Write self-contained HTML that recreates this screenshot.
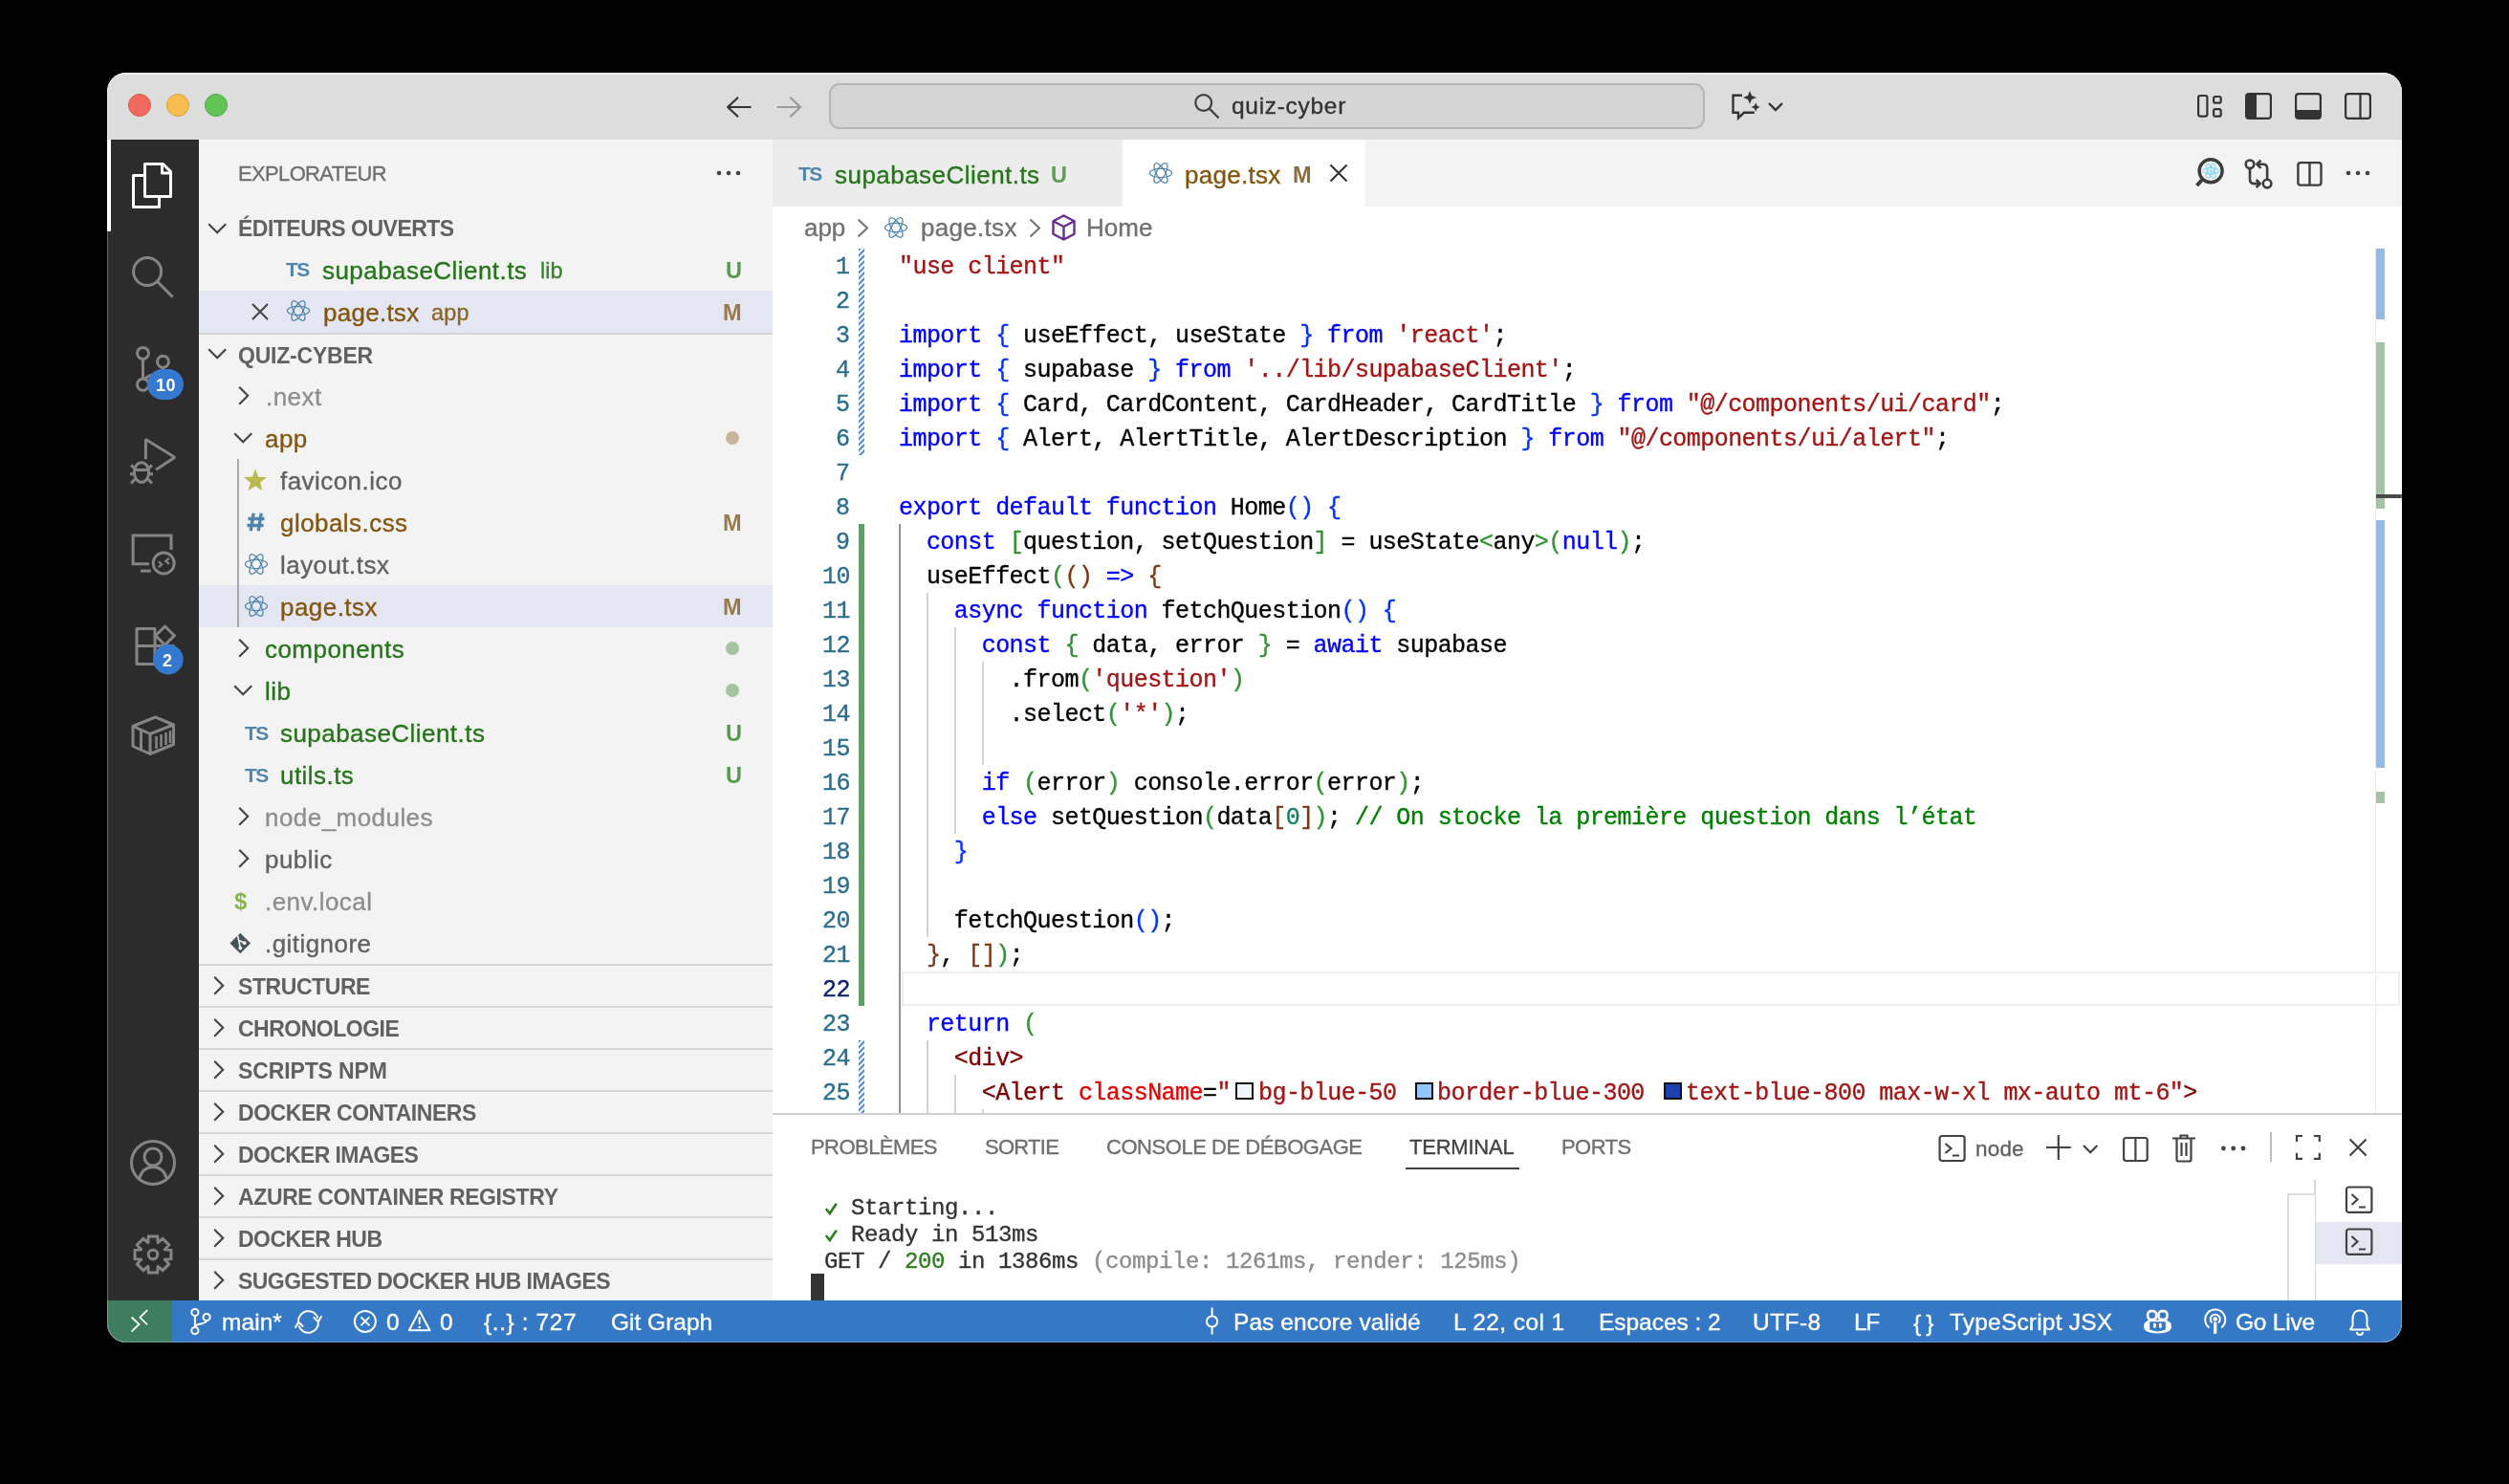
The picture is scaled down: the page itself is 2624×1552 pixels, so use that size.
<!DOCTYPE html>
<html><head><meta charset="utf-8">
<style>
*{box-sizing:border-box;margin:0;padding:0}
html,body{width:2624px;height:1552px;background:#000;overflow:hidden}
body{font-family:"Liberation Sans",sans-serif;position:relative}
.a{position:absolute}
#win{position:absolute;left:0;top:0;width:2624px;height:1552px;clip-path:inset(76px 112px 148px 112px round 20px);background:#fff}
.t{position:absolute;white-space:pre;line-height:1;will-change:transform;-webkit-text-stroke:0.35px currentColor}
svg{position:absolute;overflow:visible}
</style></head><body>
<div id="win">
<div class="a" style="left:112px;top:76px;width:2400px;height:70px;background:#dddddd;"></div>
<div class="a" style="left:112px;top:76px;width:2400px;height:2px;background:#ededed;"></div>
<div class="a" style="left:112px;top:146px;width:96px;height:1214px;background:#2c2c2c;"></div>
<div class="a" style="left:208px;top:146px;width:600px;height:1214px;background:#f3f3f3;"></div>
<div class="a" style="left:808px;top:146px;width:1704px;height:70px;background:#f3f3f3;"></div>
<div class="a" style="left:808px;top:216px;width:1704px;height:948px;background:#ffffff;"></div>
<div class="a" style="left:808px;top:1164px;width:1704px;height:196px;background:#ffffff;"></div>
<div class="a" style="left:808px;top:1164px;width:1704px;height:2px;background:#cfcfcf;"></div>
<div class="a" style="left:112px;top:1360px;width:2400px;height:44px;background:#3478c6;"></div>
<div class="a" style="left:112px;top:1360px;width:68px;height:44px;background:#3e7d5d;"></div>
<svg style="left:120px;top:90px" width="130" height="40" viewBox="0 0 130 40">
<circle cx="26" cy="20" r="11.5" fill="#ee6a5e" stroke="#d3594e" stroke-width="1"/>
<circle cx="66" cy="20" r="11.5" fill="#f5be4f" stroke="#d9a23d" stroke-width="1"/>
<circle cx="106" cy="20" r="11.5" fill="#61c455" stroke="#50a743" stroke-width="1"/>
</svg>
<svg style="left:750px;top:95px" width="100" height="35" viewBox="0 0 100 35">
<g fill="none" stroke-width="2.2" stroke-linecap="butt" stroke-linejoin="miter">
<path d="M35.5 17H11.5M22 6.8L11.2 17L22 27.2" stroke="#333"/>
<path d="M62.5 17H86.8M76.3 6.8L87.1 17L76.3 27.2" stroke="#9b9b9b"/>
</g></svg>
<div class="a" style="left:867px;top:87px;width:916px;height:48px;border:2px solid #b6b6b6;border-radius:11px;background:#d5d5d5"></div>
<svg style="left:1240px;top:90px" width="50" height="40" viewBox="0 0 50 40"><g fill="none" stroke="#3f3f3f" stroke-width="2.2"><circle cx="18.7" cy="17.5" r="8.4"/><path d="M24.8 23.6L34.6 33.4"/></g></svg>
<div class="t" style='left:1287.5px;top:96.8px;font:400 24.5px "Liberation Sans",sans-serif;color:#333333;letter-spacing:0.698px;'>quiz-cyber</div>
<svg style="left:1800px;top:90px" width="80" height="40" viewBox="0 0 80 40">
<g fill="none" stroke="#333" stroke-width="2.4" stroke-linejoin="miter">
<path d="M22 9.8H12.5V27.8H18V33.5L23.8 27.8H34.8"/>
<path d="M50 18L57 25L64 18"/>
</g>
<path fill="#333" d="M30 5L32 9.9L37 12L32 14.1L30 18.8L28 14.1L23 12L28 9.9Z"/>
<path fill="#333" d="M36.2 17.2L37.5 20.6L40.8 22L37.5 23.4L36.2 26.8L34.9 23.4L31.5 22L34.9 20.6Z"/>
</svg>
<svg style="left:2290px;top:90px" width="200" height="40" viewBox="0 0 200 40">
<g fill="none" stroke="#333" stroke-width="2.2">
<rect x="9.1" y="10" width="9.3" height="21.6" rx="2"/>
<rect x="25.1" y="11" width="7.6" height="6.7" rx="2"/>
<rect x="25.1" y="24.1" width="7.6" height="7.6" rx="2"/>
<rect x="59.1" y="8.1" width="25.8" height="25.8" rx="3"/>
<rect x="111.1" y="8.1" width="25.8" height="25.8" rx="3"/>
<rect x="163.1" y="8.1" width="25.8" height="25.8" rx="3"/>
<path d="M178.5 8.1V33.9"/>
</g>
<g fill="#333">
<path d="M59 11a3 3 0 0 1 3-3h8v26h-8a3 3 0 0 1-3-3z"/>
<path d="M111 25h26v6a3 3 0 0 1-3 3h-20a3 3 0 0 1-3-3z"/>
</g>
</svg>
<div class="a" style="left:112px;top:146px;width:4px;height:96px;background:#ffffff;"></div>
<svg style="left:130px;top:160px" width="60" height="70" viewBox="0 0 60 70">
<g fill="none" stroke="#fff" stroke-width="3" stroke-linejoin="round">
<path d="M21.5 11.5V45.5H48.5V19.5L40.5 11.5Z"/>
<path d="M39.5 11.5V21H48.5"/>
<path d="M21.5 23.5H9.5V56.5H36.5V45.5"/>
</g></svg>
<svg style="left:130px;top:260px" width="60" height="60" viewBox="0 0 60 60"><g fill="none" stroke="#858585" stroke-width="3"><circle cx="24.1" cy="24" r="14.5"/><path d="M34.8 34.8L50.6 50.6"/></g></svg>
<svg style="left:130px;top:350px" width="70" height="80" viewBox="0 0 70 80"><g fill="none" stroke="#858585" stroke-width="3">
<circle cx="19.5" cy="19.4" r="6"/><circle cx="40.5" cy="28.3" r="6"/><circle cx="19.5" cy="52.3" r="6"/>
<path d="M19.5 25.4V46.3"/><path d="M40.5 34.3C40.5 42 25 40 21 47"/></g>
<rect x="24" y="36" width="38" height="32" rx="16" fill="#3478cf"/>
</svg>
<div class="t" style='left:162.5px;top:393.2px;font:700 18px "Liberation Sans",sans-serif;color:#ffffff;letter-spacing:0.484px;-webkit-text-stroke:0;'>10</div>
<svg style="left:130px;top:450px" width="70" height="70" viewBox="0 0 70 70"><g fill="none" stroke="#858585" stroke-width="3" stroke-linejoin="bevel">
<path d="M22.4 30.2V9.5L52.8 28.2L33.1 41.2"/>
<ellipse cx="18" cy="44" rx="7.6" ry="10.3"/>
<path d="M10.5 41.4H25.5M6 45.7H10.5M25.5 45.7H30M7 36.5L11 40M29 36.5L25 40M7 55.5L11.3 51M29 55.5L24.7 51"/>
</g></svg>
<svg style="left:130px;top:550px" width="70" height="60" viewBox="0 0 70 60"><g fill="none" stroke="#858585" stroke-width="3">
<path d="M26 39.7H9.1V9.9H49V25"/>
<path d="M17 47.1H27.8"/>
<circle cx="41.2" cy="39" r="11"/>
<path d="M35.8 37.2L39.2 40.2L35.8 43.2M46.8 33.8L43.3 36.8L46.8 39.8" stroke-width="2.2"/>
</g></svg>
<svg style="left:130px;top:640px" width="70" height="70" viewBox="0 0 70 70"><g fill="none" stroke="#858585" stroke-width="3">
<path d="M13 17.5H32V54.4H13ZM13 35.4H51.5V54.4H32" stroke-linejoin="round"/>
<path d="M42.5 15L52.3 24.8L42.5 34.6L32.7 24.8Z"/>
</g>
<circle cx="45.9" cy="49.7" r="15.8" fill="#3478cf"/>
</svg>
<div class="t" style='left:169.5px;top:681.2px;font:700 18px "Liberation Sans",sans-serif;color:#ffffff;-webkit-text-stroke:0;'>2</div>
<svg style="left:130px;top:740px" width="60" height="60" viewBox="0 0 60 60"><g fill="none" stroke="#858585" stroke-width="3" stroke-linejoin="round">
<path d="M9 19.5L32.5 10L51.5 18V38.5L27 48.5L9 40.5Z"/>
<path d="M9 19.5L27 27.5L51.5 18M27 27.5V48.5M17.5 23.5V44.5"/>
<path d="M33.5 30V43M38.5 28V41M43.5 26V39M48 24V37" stroke-width="2.5"/>
</g></svg>
<svg style="left:130px;top:1186px" width="60" height="60" viewBox="0 0 60 60"><g fill="none" stroke="#858585" stroke-width="3">
<circle cx="30" cy="30" r="22.5"/><circle cx="30" cy="24" r="9"/>
<path d="M15.5 47C18 38 24 34.5 30 34.5S42 38 44.5 47"/></g></svg>
<svg style="left:130px;top:1282px" width="60" height="60" viewBox="0 0 60 60"><g fill="none" stroke="#858585" stroke-width="3" stroke-linejoin="miter"><path d="M48.94 25.36 L48.94 34.64 L42.49 35.13 L42.46 35.20 L46.67 40.12 L40.12 46.67 L35.20 42.46 L35.13 42.49 L34.64 48.94 L25.36 48.94 L24.87 42.49 L24.80 42.46 L19.88 46.67 L13.33 40.12 L17.54 35.20 L17.51 35.13 L11.06 34.64 L11.06 25.36 L17.51 24.87 L17.54 24.80 L13.33 19.88 L19.88 13.33 L24.80 17.54 L24.87 17.51 L25.36 11.06 L34.64 11.06 L35.13 17.51 L35.20 17.54 L40.12 13.33 L46.67 19.88 L42.46 24.80 L42.49 24.87Z"/><circle cx="30" cy="30" r="4.8"/></g></svg>
<div class="t" style='left:249.2px;top:169.1px;font:400 22px "Liberation Sans",sans-serif;color:#6f6f6f;letter-spacing:-0.653px;'>EXPLORATEUR</div>
<svg style="left:747px;top:176px" width="30" height="10" viewBox="0 0 30 10"><circle cx="5" cy="5" r="2.3" fill="#424242"/><circle cx="15" cy="5" r="2.3" fill="#424242"/><circle cx="25" cy="5" r="2.3" fill="#424242"/></svg>
<svg style="left:217px;top:228.5px" width="24" height="20" viewBox="0 0 24 20"><path d="M1.2 5.3L10.2 14.3L19.2 5.3" fill="none" stroke="#424242" stroke-width="2.1"/></svg>
<div class="t" style='left:249.2px;top:225.8px;font:700 23px "Liberation Sans",sans-serif;color:#616161;letter-spacing:-0.511px;-webkit-text-stroke:0;'>ÉDITEURS OUVERTS</div>
<div class="t" style='left:299.2px;top:270.4px;font:700 21px "Liberation Sans",sans-serif;color:#5186aa;letter-spacing:-1.622px;-webkit-text-stroke:0;'>TS</div>
<div class="t" style='left:337.0px;top:267.5px;font:400 26px "Liberation Sans",sans-serif;color:#25741a;letter-spacing:0.448px;'>supabaseClient.ts</div>
<div class="t" style='left:565.3px;top:269.7px;font:400 23.4px "Liberation Sans",sans-serif;color:#25741a;letter-spacing:-0.002px;opacity:.9;'>lib</div>
<div class="t" style='left:758.5px;top:269.6px;font:700 23.5px "Liberation Sans",sans-serif;color:#549a4a;letter-spacing:-0.384px;-webkit-text-stroke:0;'>U</div>
<div class="a" style="left:208px;top:304px;width:600px;height:44px;background:#e4e6f1;"></div>
<svg style="left:262px;top:316px" width="20" height="20" viewBox="0 0 20 20"><path d="M2 2L18 18M18 2L2 18" stroke="#424242" stroke-width="2" fill="none"/></svg>
<svg style="left:297.6px;top:311.4px" width="28.0" height="28.0" viewBox="0 0 28.0 28.0"><g transform="translate(14.0,14.0)" fill="none" stroke="#5186aa" stroke-width="1.25"><ellipse cx="0" cy="0" rx="11.60" ry="4.60" transform="rotate(0)"/><ellipse cx="0" cy="0" rx="11.60" ry="4.60" transform="rotate(60)"/><ellipse cx="0" cy="0" rx="11.60" ry="4.60" transform="rotate(120)"/></g></svg>
<div class="t" style='left:337.5px;top:311.5px;font:400 26px "Liberation Sans",sans-serif;color:#83550f;letter-spacing:0.263px;'>page.tsx</div>
<div class="t" style='left:451.2px;top:313.7px;font:400 23.4px "Liberation Sans",sans-serif;color:#83550f;letter-spacing:0.223px;opacity:.9;'>app</div>
<div class="t" style='left:756.2px;top:313.6px;font:700 23.5px "Liberation Sans",sans-serif;color:#9a7a4c;letter-spacing:-0.078px;-webkit-text-stroke:0;'>M</div>
<div class="a" style="left:208px;top:348px;width:600px;height:2px;background:#d8d8d8;"></div>
<svg style="left:217px;top:360px" width="24" height="20" viewBox="0 0 24 20"><path d="M1.2 5.3L10.2 14.3L19.2 5.3" fill="none" stroke="#424242" stroke-width="2.1"/></svg>
<div class="t" style='left:249.2px;top:359.1px;font:700 23px "Liberation Sans",sans-serif;color:#616161;letter-spacing:-0.212px;-webkit-text-stroke:0;'>QUIZ-CYBER</div>
<svg style="left:249px;top:402px" width="20" height="24" viewBox="0 0 20 24"><path d="M1.2 2.8L10.2 11.8L1.2 20.8" fill="none" stroke="#424242" stroke-width="2.1"/></svg>
<div class="t" style='left:277.9px;top:399.9px;font:400 26px "Liberation Sans",sans-serif;color:#8e8e8e;letter-spacing:0.450px;'>.next</div>
<svg style="left:243.8px;top:448px" width="24" height="20" viewBox="0 0 24 20"><path d="M1.2 5.3L10.2 14.3L19.2 5.3" fill="none" stroke="#424242" stroke-width="2.1"/></svg>
<div class="t" style='left:276.8px;top:443.9px;font:400 26px "Liberation Sans",sans-serif;color:#83550f;letter-spacing:0.450px;'>app</div>
<svg style="left:758.8px;top:451px" width="14" height="14" viewBox="0 0 14 14"><circle cx="7" cy="7" r="7" fill="#c9b59a"/></svg>
<svg style="left:253.2px;top:489px" width="28" height="28" viewBox="0 0 28 28"><polygon points="14.00,1.40 17.12,9.71 25.98,10.11 19.04,15.64 21.41,24.19 14.00,19.30 6.59,24.19 8.96,15.64 2.02,10.11 10.88,9.71" fill="#b9b950"/></svg>
<div class="t" style='left:292.9px;top:487.9px;font:400 26px "Liberation Sans",sans-serif;color:#616161;letter-spacing:0.450px;'>favicon.ico</div>
<svg style="left:256px;top:533px" width="24" height="26" viewBox="0 0 24 26"><path d="M9.2 3.8L6.2 22.2M17.2 3.8L14.2 22.2M3.5 9.5H20.5M2.5 16.5H19.5" stroke="#5186aa" stroke-width="3.4" fill="none"/></svg>
<div class="t" style='left:292.9px;top:531.9px;font:400 26px "Liberation Sans",sans-serif;color:#83550f;letter-spacing:0.450px;'>globals.css</div>
<div class="t" style='left:756.2px;top:533.7px;font:700 23.5px "Liberation Sans",sans-serif;color:#9a7a4c;letter-spacing:-0.078px;-webkit-text-stroke:0;'>M</div>
<svg style="left:253.60000000000002px;top:575.5px" width="28.0" height="28.0" viewBox="0 0 28.0 28.0"><g transform="translate(14.0,14.0)" fill="none" stroke="#5186aa" stroke-width="1.25"><ellipse cx="0" cy="0" rx="11.60" ry="4.60" transform="rotate(0)"/><ellipse cx="0" cy="0" rx="11.60" ry="4.60" transform="rotate(60)"/><ellipse cx="0" cy="0" rx="11.60" ry="4.60" transform="rotate(120)"/></g></svg>
<div class="t" style='left:292.9px;top:575.9px;font:400 26px "Liberation Sans",sans-serif;color:#616161;letter-spacing:0.450px;'>layout.tsx</div>
<div class="a" style="left:208px;top:612px;width:600px;height:44px;background:#e4e6f1;"></div>
<svg style="left:253.60000000000002px;top:619.5px" width="28.0" height="28.0" viewBox="0 0 28.0 28.0"><g transform="translate(14.0,14.0)" fill="none" stroke="#5186aa" stroke-width="1.25"><ellipse cx="0" cy="0" rx="11.60" ry="4.60" transform="rotate(0)"/><ellipse cx="0" cy="0" rx="11.60" ry="4.60" transform="rotate(60)"/><ellipse cx="0" cy="0" rx="11.60" ry="4.60" transform="rotate(120)"/></g></svg>
<div class="t" style='left:292.9px;top:619.9px;font:400 26px "Liberation Sans",sans-serif;color:#83550f;letter-spacing:0.450px;'>page.tsx</div>
<div class="t" style='left:756.2px;top:621.7px;font:700 23.5px "Liberation Sans",sans-serif;color:#9a7a4c;letter-spacing:-0.078px;-webkit-text-stroke:0;'>M</div>
<svg style="left:249px;top:666px" width="20" height="24" viewBox="0 0 20 24"><path d="M1.2 2.8L10.2 11.8L1.2 20.8" fill="none" stroke="#424242" stroke-width="2.1"/></svg>
<div class="t" style='left:277.2px;top:663.9px;font:400 26px "Liberation Sans",sans-serif;color:#25741a;letter-spacing:0.450px;'>components</div>
<svg style="left:758.8px;top:671px" width="14" height="14" viewBox="0 0 14 14"><circle cx="7" cy="7" r="7" fill="#a4c49f"/></svg>
<svg style="left:243.8px;top:712px" width="24" height="20" viewBox="0 0 24 20"><path d="M1.2 5.3L10.2 14.3L19.2 5.3" fill="none" stroke="#424242" stroke-width="2.1"/></svg>
<div class="t" style='left:277.0px;top:707.9px;font:400 26px "Liberation Sans",sans-serif;color:#25741a;letter-spacing:0.450px;'>lib</div>
<svg style="left:758.8px;top:715px" width="14" height="14" viewBox="0 0 14 14"><circle cx="7" cy="7" r="7" fill="#a4c49f"/></svg>
<div class="t" style='left:255.6px;top:754.9px;font:700 21px "Liberation Sans",sans-serif;color:#5186aa;letter-spacing:-1.622px;-webkit-text-stroke:0;'>TS</div>
<div class="t" style='left:293.2px;top:751.9px;font:400 26px "Liberation Sans",sans-serif;color:#25741a;letter-spacing:0.450px;'>supabaseClient.ts</div>
<div class="t" style='left:758.5px;top:753.7px;font:700 23.5px "Liberation Sans",sans-serif;color:#549a4a;letter-spacing:-0.384px;-webkit-text-stroke:0;'>U</div>
<div class="t" style='left:255.6px;top:798.9px;font:700 21px "Liberation Sans",sans-serif;color:#5186aa;letter-spacing:-1.622px;-webkit-text-stroke:0;'>TS</div>
<div class="t" style='left:293.2px;top:795.9px;font:400 26px "Liberation Sans",sans-serif;color:#25741a;letter-spacing:0.450px;'>utils.ts</div>
<div class="t" style='left:758.5px;top:797.7px;font:700 23.5px "Liberation Sans",sans-serif;color:#549a4a;letter-spacing:-0.384px;-webkit-text-stroke:0;'>U</div>
<svg style="left:249px;top:842px" width="20" height="24" viewBox="0 0 20 24"><path d="M1.2 2.8L10.2 11.8L1.2 20.8" fill="none" stroke="#424242" stroke-width="2.1"/></svg>
<div class="t" style='left:277.0px;top:839.9px;font:400 26px "Liberation Sans",sans-serif;color:#8e8e8e;letter-spacing:0.450px;'>node_modules</div>
<svg style="left:249px;top:886px" width="20" height="24" viewBox="0 0 20 24"><path d="M1.2 2.8L10.2 11.8L1.2 20.8" fill="none" stroke="#424242" stroke-width="2.1"/></svg>
<div class="t" style='left:277.0px;top:883.9px;font:400 26px "Liberation Sans",sans-serif;color:#616161;letter-spacing:0.450px;'>public</div>
<div class="t" style='left:244.5px;top:928.6px;font:700 24px "Liberation Sans",sans-serif;color:#89b64b;-webkit-text-stroke:0;'>$</div>
<div class="t" style='left:277.4px;top:927.9px;font:400 26px "Liberation Sans",sans-serif;color:#8e8e8e;letter-spacing:0.450px;'>.env.local</div>
<svg style="left:239px;top:972.5px" width="26" height="26" viewBox="0 0 26 26"><path d="M12.3 2.7L23.1 13.5L12.3 24.3L1.5 13.5Z" fill="#41535b"/><path d="M9.7 5.5L12.3 18.5M11 10.5L16.7 13.2" stroke="#f3f3f3" stroke-width="1.6" fill="none"/><circle cx="12.3" cy="18.5" r="1.9" fill="#f3f3f3"/><circle cx="16.7" cy="13.2" r="1.9" fill="#f3f3f3"/></svg>
<div class="t" style='left:277.4px;top:971.9px;font:400 26px "Liberation Sans",sans-serif;color:#616161;letter-spacing:0.450px;'>.gitignore</div>
<div class="a" style="left:248px;top:480px;width:2px;height:176px;background:#a9a9a9;"></div>
<div class="a" style="left:208px;top:1008px;width:600px;height:2px;background:#d8d8d8;"></div>
<svg style="left:222.5px;top:1018.5px" width="20" height="24" viewBox="0 0 20 24"><path d="M1.2 2.8L10.2 11.8L1.2 20.8" fill="none" stroke="#424242" stroke-width="2.1"/></svg>
<div class="t" style='left:249.0px;top:1019.0px;font:700 23px "Liberation Sans",sans-serif;color:#616161;letter-spacing:-0.427px;-webkit-text-stroke:0;'>STRUCTURE</div>
<div class="a" style="left:208px;top:1052px;width:600px;height:2px;background:#d8d8d8;"></div>
<svg style="left:222.5px;top:1062.5px" width="20" height="24" viewBox="0 0 20 24"><path d="M1.2 2.8L10.2 11.8L1.2 20.8" fill="none" stroke="#424242" stroke-width="2.1"/></svg>
<div class="t" style='left:249.0px;top:1063.0px;font:700 23px "Liberation Sans",sans-serif;color:#616161;letter-spacing:-0.498px;-webkit-text-stroke:0;'>CHRONOLOGIE</div>
<div class="a" style="left:208px;top:1096px;width:600px;height:2px;background:#d8d8d8;"></div>
<svg style="left:222.5px;top:1106.5px" width="20" height="24" viewBox="0 0 20 24"><path d="M1.2 2.8L10.2 11.8L1.2 20.8" fill="none" stroke="#424242" stroke-width="2.1"/></svg>
<div class="t" style='left:249.0px;top:1107.0px;font:700 23px "Liberation Sans",sans-serif;color:#616161;letter-spacing:-0.126px;-webkit-text-stroke:0;'>SCRIPTS NPM</div>
<div class="a" style="left:208px;top:1140px;width:600px;height:2px;background:#d8d8d8;"></div>
<svg style="left:222.5px;top:1150.5px" width="20" height="24" viewBox="0 0 20 24"><path d="M1.2 2.8L10.2 11.8L1.2 20.8" fill="none" stroke="#424242" stroke-width="2.1"/></svg>
<div class="t" style='left:249.0px;top:1151.0px;font:700 23px "Liberation Sans",sans-serif;color:#616161;letter-spacing:-0.442px;-webkit-text-stroke:0;'>DOCKER CONTAINERS</div>
<div class="a" style="left:208px;top:1184px;width:600px;height:2px;background:#d8d8d8;"></div>
<svg style="left:222.5px;top:1194.5px" width="20" height="24" viewBox="0 0 20 24"><path d="M1.2 2.8L10.2 11.8L1.2 20.8" fill="none" stroke="#424242" stroke-width="2.1"/></svg>
<div class="t" style='left:249.0px;top:1195.0px;font:700 23px "Liberation Sans",sans-serif;color:#616161;letter-spacing:-0.661px;-webkit-text-stroke:0;'>DOCKER IMAGES</div>
<div class="a" style="left:208px;top:1228px;width:600px;height:2px;background:#d8d8d8;"></div>
<svg style="left:222.5px;top:1238.5px" width="20" height="24" viewBox="0 0 20 24"><path d="M1.2 2.8L10.2 11.8L1.2 20.8" fill="none" stroke="#424242" stroke-width="2.1"/></svg>
<div class="t" style='left:249.0px;top:1239.0px;font:700 23px "Liberation Sans",sans-serif;color:#616161;letter-spacing:-0.381px;-webkit-text-stroke:0;'>AZURE CONTAINER REGISTRY</div>
<div class="a" style="left:208px;top:1272px;width:600px;height:2px;background:#d8d8d8;"></div>
<svg style="left:222.5px;top:1282.5px" width="20" height="24" viewBox="0 0 20 24"><path d="M1.2 2.8L10.2 11.8L1.2 20.8" fill="none" stroke="#424242" stroke-width="2.1"/></svg>
<div class="t" style='left:249.0px;top:1283.0px;font:700 23px "Liberation Sans",sans-serif;color:#616161;letter-spacing:-0.539px;-webkit-text-stroke:0;'>DOCKER HUB</div>
<div class="a" style="left:208px;top:1316px;width:600px;height:2px;background:#d8d8d8;"></div>
<svg style="left:222.5px;top:1326.5px" width="20" height="24" viewBox="0 0 20 24"><path d="M1.2 2.8L10.2 11.8L1.2 20.8" fill="none" stroke="#424242" stroke-width="2.1"/></svg>
<div class="t" style='left:249.0px;top:1327.0px;font:700 23px "Liberation Sans",sans-serif;color:#616161;letter-spacing:-0.549px;-webkit-text-stroke:0;'>SUGGESTED DOCKER HUB IMAGES</div>
<div class="a" style="left:808px;top:146px;width:366px;height:70px;background:#ececec;"></div>
<div class="a" style="left:1174px;top:146px;width:254px;height:70px;background:#ffffff;"></div>
<div class="t" style='left:835.2px;top:169.7px;font:700 21px "Liberation Sans",sans-serif;color:#5186aa;letter-spacing:-1.622px;-webkit-text-stroke:0;'>TS</div>
<div class="t" style='left:872.9px;top:167.6px;font:400 26px "Liberation Sans",sans-serif;color:#25741a;letter-spacing:0.465px;'>supabaseClient.ts</div>
<div class="t" style='left:1099.0px;top:169.7px;font:700 23.5px "Liberation Sans",sans-serif;color:#5f9d52;letter-spacing:-0.384px;-webkit-text-stroke:0;'>U</div>
<svg style="left:1199.6px;top:167.0px" width="28.0" height="28.0" viewBox="0 0 28.0 28.0"><g transform="translate(14.0,14.0)" fill="none" stroke="#5186aa" stroke-width="1.25"><ellipse cx="0" cy="0" rx="11.60" ry="4.60" transform="rotate(0)"/><ellipse cx="0" cy="0" rx="11.60" ry="4.60" transform="rotate(60)"/><ellipse cx="0" cy="0" rx="11.60" ry="4.60" transform="rotate(120)"/></g></svg>
<div class="t" style='left:1239.3px;top:167.6px;font:400 26px "Liberation Sans",sans-serif;color:#83550f;letter-spacing:0.288px;'>page.tsx</div>
<div class="t" style='left:1351.6px;top:169.7px;font:700 23.5px "Liberation Sans",sans-serif;color:#8d6b3f;letter-spacing:-0.078px;-webkit-text-stroke:0;'>M</div>
<svg style="left:1390px;top:171px" width="20" height="20" viewBox="0 0 20 20"><path d="M1.5 1.5L18.5 18.5M18.5 1.5L1.5 18.5" stroke="#333" stroke-width="2.1" fill="none"/></svg>
<svg style="left:2290px;top:160px" width="40" height="40" viewBox="0 0 40 40"><g fill="none" stroke="#3c3c3c"><circle cx="22.1" cy="18.7" r="12" stroke-width="3.4"/><path d="M14 27L7.5 34" stroke-width="4"/></g>
<g transform="translate(22.1,18.7)" fill="none" stroke="#7fd6f5" stroke-width="1.1"><ellipse rx="8.3" ry="3.2"/><ellipse rx="8.3" ry="3.2" transform="rotate(60)"/><ellipse rx="8.3" ry="3.2" transform="rotate(120)"/></g><circle cx="22.1" cy="18.7" r="1.5" fill="#7fd6f5"/></svg>
<svg style="left:2340px;top:160px" width="45" height="45" viewBox="0 0 45 45"><g fill="none" stroke="#3c3c3c" stroke-width="2.6">
<circle cx="13" cy="11.8" r="4.3"/><circle cx="31.1" cy="32.1" r="4.3"/>
<path d="M13 16.1V27.6Q13 32.1 17.5 32.1H23.5"/>
<path d="M19.6 28L23.7 32.1L19.6 36.2"/>
<path d="M31.1 27.8V16.3Q31.1 11.8 26.6 11.8H20.6"/>
<path d="M24.5 7.7L20.4 11.8L24.5 15.9"/>
</g></svg>
<svg style="left:2395px;top:160px" width="40" height="40" viewBox="0 0 40 40"><g fill="none" stroke="#3c3c3c" stroke-width="2.4"><rect x="8.4" y="10.1" width="24.1" height="23.5" rx="2.5"/><path d="M20.5 10V33.6"/></g></svg>
<svg style="left:2451px;top:176px" width="30" height="10" viewBox="0 0 30 10"><circle cx="5" cy="5" r="2.3" fill="#424242"/><circle cx="15" cy="5" r="2.3" fill="#424242"/><circle cx="25" cy="5" r="2.3" fill="#424242"/></svg>
<div class="t" style='left:840.9px;top:223.1px;font:400 26px "Liberation Sans",sans-serif;color:#717171;letter-spacing:-0.030px;'>app</div>
<svg style="left:895px;top:228px" width="16" height="22" viewBox="0 0 16 22"><path d="M2.5 1.5L12 10.5L2.5 19.5" fill="none" stroke="#717171" stroke-width="2"/></svg>
<svg style="left:923.3px;top:224.0px" width="28.0" height="28.0" viewBox="0 0 28.0 28.0"><g transform="translate(14.0,14.0)" fill="none" stroke="#5186aa" stroke-width="1.25"><ellipse cx="0" cy="0" rx="11.60" ry="4.60" transform="rotate(0)"/><ellipse cx="0" cy="0" rx="11.60" ry="4.60" transform="rotate(60)"/><ellipse cx="0" cy="0" rx="11.60" ry="4.60" transform="rotate(120)"/></g></svg>
<div class="t" style='left:963.3px;top:223.1px;font:400 26px "Liberation Sans",sans-serif;color:#717171;letter-spacing:0.300px;'>page.tsx</div>
<svg style="left:1075px;top:228px" width="16" height="22" viewBox="0 0 16 22"><path d="M2.5 1.5L12 10.5L2.5 19.5" fill="none" stroke="#717171" stroke-width="2"/></svg>
<svg style="left:1098px;top:222.5px" width="30" height="30" viewBox="0 0 30 30"><g fill="none" stroke="#652d90" stroke-width="2.4" stroke-linejoin="round"><path d="M14.5 2.5L25.5 8.2V21.8L14.5 27.5L3.5 21.8V8.2Z"/><path d="M3.5 8.2L14.5 14L25.5 8.2M14.5 14V27.5"/></g></svg>
<div class="t" style='left:1136.2px;top:223.1px;font:400 26px "Liberation Sans",sans-serif;color:#717171;letter-spacing:0.010px;'>Home</div>
<div class="a" style="left:943px;top:1016px;width:1567px;height:36px;border:2px solid #eeeeee"></div>
<div class="a" style="left:940px;top:548px;width:2px;height:616px;background:#939393;"></div>
<div class="a" style="left:969px;top:620px;width:2px;height:360px;background:#d3d3d3;"></div>
<div class="a" style="left:969px;top:1088px;width:2px;height:76px;background:#d3d3d3;"></div>
<div class="a" style="left:998px;top:656px;width:2px;height:216px;background:#d3d3d3;"></div>
<div class="a" style="left:998px;top:1124px;width:2px;height:40px;background:#d3d3d3;"></div>
<div class="a" style="left:1027px;top:692px;width:2px;height:108px;background:#d3d3d3;"></div>
<svg style="left:898px;top:260px" width="6" height="216"><defs><pattern id="hp1" width="4.24" height="4.24" patternUnits="userSpaceOnUse" patternTransform="rotate(-45)"><rect width="4.24" height="4.24" fill="#ffffff"/><rect width="4.24" height="1.9" fill="#3a80d0"/></pattern></defs><rect width="6" height="216" fill="url(#hp1)"/></svg>
<svg style="left:898px;top:1088px" width="6" height="76"><defs><pattern id="hp2" width="4.24" height="4.24" patternUnits="userSpaceOnUse" patternTransform="rotate(-45)"><rect width="4.24" height="4.24" fill="#ffffff"/><rect width="4.24" height="1.9" fill="#3a80d0"/></pattern></defs><rect width="6" height="76" fill="url(#hp2)"/></svg>
<div class="a" style="left:898px;top:548px;width:6px;height:504px;background:#5f9e68;"></div>
<div class="t" style='left:874.0px;top:265.3px;font:25px "Liberation Mono",monospace;letter-spacing:-0.550px;color:#2a6d8c'>1</div>
<div class="t" style='left:874.0px;top:301.3px;font:25px "Liberation Mono",monospace;letter-spacing:-0.550px;color:#2a6d8c'>2</div>
<div class="t" style='left:874.0px;top:337.3px;font:25px "Liberation Mono",monospace;letter-spacing:-0.550px;color:#2a6d8c'>3</div>
<div class="t" style='left:874.0px;top:373.3px;font:25px "Liberation Mono",monospace;letter-spacing:-0.550px;color:#2a6d8c'>4</div>
<div class="t" style='left:874.0px;top:409.3px;font:25px "Liberation Mono",monospace;letter-spacing:-0.550px;color:#2a6d8c'>5</div>
<div class="t" style='left:874.0px;top:445.3px;font:25px "Liberation Mono",monospace;letter-spacing:-0.550px;color:#2a6d8c'>6</div>
<div class="t" style='left:874.0px;top:481.3px;font:25px "Liberation Mono",monospace;letter-spacing:-0.550px;color:#2a6d8c'>7</div>
<div class="t" style='left:874.0px;top:517.3px;font:25px "Liberation Mono",monospace;letter-spacing:-0.550px;color:#2a6d8c'>8</div>
<div class="t" style='left:874.0px;top:553.3px;font:25px "Liberation Mono",monospace;letter-spacing:-0.550px;color:#2a6d8c'>9</div>
<div class="t" style='left:859.6px;top:589.3px;font:25px "Liberation Mono",monospace;letter-spacing:-0.550px;color:#2a6d8c'>10</div>
<div class="t" style='left:859.6px;top:625.3px;font:25px "Liberation Mono",monospace;letter-spacing:-0.550px;color:#2a6d8c'>11</div>
<div class="t" style='left:859.6px;top:661.3px;font:25px "Liberation Mono",monospace;letter-spacing:-0.550px;color:#2a6d8c'>12</div>
<div class="t" style='left:859.6px;top:697.3px;font:25px "Liberation Mono",monospace;letter-spacing:-0.550px;color:#2a6d8c'>13</div>
<div class="t" style='left:859.6px;top:733.3px;font:25px "Liberation Mono",monospace;letter-spacing:-0.550px;color:#2a6d8c'>14</div>
<div class="t" style='left:859.6px;top:769.3px;font:25px "Liberation Mono",monospace;letter-spacing:-0.550px;color:#2a6d8c'>15</div>
<div class="t" style='left:859.6px;top:805.3px;font:25px "Liberation Mono",monospace;letter-spacing:-0.550px;color:#2a6d8c'>16</div>
<div class="t" style='left:859.6px;top:841.3px;font:25px "Liberation Mono",monospace;letter-spacing:-0.550px;color:#2a6d8c'>17</div>
<div class="t" style='left:859.6px;top:877.3px;font:25px "Liberation Mono",monospace;letter-spacing:-0.550px;color:#2a6d8c'>18</div>
<div class="t" style='left:859.6px;top:913.3px;font:25px "Liberation Mono",monospace;letter-spacing:-0.550px;color:#2a6d8c'>19</div>
<div class="t" style='left:859.6px;top:949.3px;font:25px "Liberation Mono",monospace;letter-spacing:-0.550px;color:#2a6d8c'>20</div>
<div class="t" style='left:859.6px;top:985.3px;font:25px "Liberation Mono",monospace;letter-spacing:-0.550px;color:#2a6d8c'>21</div>
<div class="t" style='left:859.6px;top:1021.3px;font:25px "Liberation Mono",monospace;letter-spacing:-0.550px;color:#0b216f'>22</div>
<div class="t" style='left:859.6px;top:1057.3px;font:25px "Liberation Mono",monospace;letter-spacing:-0.550px;color:#2a6d8c'>23</div>
<div class="t" style='left:859.6px;top:1093.3px;font:25px "Liberation Mono",monospace;letter-spacing:-0.550px;color:#2a6d8c'>24</div>
<div class="t" style='left:859.6px;top:1129.3px;font:25px "Liberation Mono",monospace;letter-spacing:-0.550px;color:#2a6d8c'>25</div>
<div class="t" style='left:940.0px;top:265.3px;font:25px "Liberation Mono",monospace;letter-spacing:-0.550px;color:#000'><span style="color:#a31515">"use client"</span></div>
<div class="t" style='left:940.0px;top:337.3px;font:25px "Liberation Mono",monospace;letter-spacing:-0.550px;color:#000'><span style="color:#0000ff">import</span><span style="color:#000000"> </span><span style="color:#0431fa">{</span><span style="color:#000000"> useEffect, useState </span><span style="color:#0431fa">}</span><span style="color:#000000"> </span><span style="color:#0000ff">from</span><span style="color:#000000"> </span><span style="color:#a31515">'react'</span><span style="color:#000000">;</span></div>
<div class="t" style='left:940.0px;top:373.3px;font:25px "Liberation Mono",monospace;letter-spacing:-0.550px;color:#000'><span style="color:#0000ff">import</span><span style="color:#000000"> </span><span style="color:#0431fa">{</span><span style="color:#000000"> supabase </span><span style="color:#0431fa">}</span><span style="color:#000000"> </span><span style="color:#0000ff">from</span><span style="color:#000000"> </span><span style="color:#a31515">'../lib/supabaseClient'</span><span style="color:#000000">;</span></div>
<div class="t" style='left:940.0px;top:409.3px;font:25px "Liberation Mono",monospace;letter-spacing:-0.550px;color:#000'><span style="color:#0000ff">import</span><span style="color:#000000"> </span><span style="color:#0431fa">{</span><span style="color:#000000"> Card, CardContent, CardHeader, CardTitle </span><span style="color:#0431fa">}</span><span style="color:#000000"> </span><span style="color:#0000ff">from</span><span style="color:#000000"> </span><span style="color:#a31515">"@/components/ui/card"</span><span style="color:#000000">;</span></div>
<div class="t" style='left:940.0px;top:445.3px;font:25px "Liberation Mono",monospace;letter-spacing:-0.550px;color:#000'><span style="color:#0000ff">import</span><span style="color:#000000"> </span><span style="color:#0431fa">{</span><span style="color:#000000"> Alert, AlertTitle, AlertDescription </span><span style="color:#0431fa">}</span><span style="color:#000000"> </span><span style="color:#0000ff">from</span><span style="color:#000000"> </span><span style="color:#a31515">"@/components/ui/alert"</span><span style="color:#000000">;</span></div>
<div class="t" style='left:940.0px;top:517.3px;font:25px "Liberation Mono",monospace;letter-spacing:-0.550px;color:#000'><span style="color:#0000ff">export</span><span style="color:#000000"> </span><span style="color:#0000ff">default</span><span style="color:#000000"> </span><span style="color:#0000ff">function</span><span style="color:#000000"> Home</span><span style="color:#0431fa">()</span><span style="color:#000000"> </span><span style="color:#0431fa">{</span></div>
<div class="t" style='left:940.0px;top:553.3px;font:25px "Liberation Mono",monospace;letter-spacing:-0.550px;color:#000'><span style="color:#000000">  </span><span style="color:#0000ff">const</span><span style="color:#000000"> </span><span style="color:#319331">[</span><span style="color:#000000">question, setQuestion</span><span style="color:#319331">]</span><span style="color:#000000"> = useState</span><span style="color:#319331">&lt;</span><span style="color:#000000">any</span><span style="color:#319331">&gt;</span><span style="color:#319331">(</span><span style="color:#0000ff">null</span><span style="color:#319331">)</span><span style="color:#000000">;</span></div>
<div class="t" style='left:940.0px;top:589.3px;font:25px "Liberation Mono",monospace;letter-spacing:-0.550px;color:#000'><span style="color:#000000">  useEffect</span><span style="color:#319331">(</span><span style="color:#7b3814">()</span><span style="color:#000000"> </span><span style="color:#0000ff">=&gt;</span><span style="color:#000000"> </span><span style="color:#7b3814">{</span></div>
<div class="t" style='left:940.0px;top:625.3px;font:25px "Liberation Mono",monospace;letter-spacing:-0.550px;color:#000'><span style="color:#000000">    </span><span style="color:#0000ff">async</span><span style="color:#000000"> </span><span style="color:#0000ff">function</span><span style="color:#000000"> fetchQuestion</span><span style="color:#0431fa">()</span><span style="color:#000000"> </span><span style="color:#0431fa">{</span></div>
<div class="t" style='left:940.0px;top:661.3px;font:25px "Liberation Mono",monospace;letter-spacing:-0.550px;color:#000'><span style="color:#000000">      </span><span style="color:#0000ff">const</span><span style="color:#000000"> </span><span style="color:#319331">{</span><span style="color:#000000"> data, error </span><span style="color:#319331">}</span><span style="color:#000000"> = </span><span style="color:#0000ff">await</span><span style="color:#000000"> supabase</span></div>
<div class="t" style='left:940.0px;top:697.3px;font:25px "Liberation Mono",monospace;letter-spacing:-0.550px;color:#000'><span style="color:#000000">        .from</span><span style="color:#319331">(</span><span style="color:#a31515">'question'</span><span style="color:#319331">)</span></div>
<div class="t" style='left:940.0px;top:733.3px;font:25px "Liberation Mono",monospace;letter-spacing:-0.550px;color:#000'><span style="color:#000000">        .select</span><span style="color:#319331">(</span><span style="color:#a31515">'*'</span><span style="color:#319331">)</span><span style="color:#000000">;</span></div>
<div class="t" style='left:940.0px;top:805.3px;font:25px "Liberation Mono",monospace;letter-spacing:-0.550px;color:#000'><span style="color:#000000">      </span><span style="color:#0000ff">if</span><span style="color:#000000"> </span><span style="color:#319331">(</span><span style="color:#000000">error</span><span style="color:#319331">)</span><span style="color:#000000"> console.error</span><span style="color:#319331">(</span><span style="color:#000000">error</span><span style="color:#319331">)</span><span style="color:#000000">;</span></div>
<div class="t" style='left:940.0px;top:841.3px;font:25px "Liberation Mono",monospace;letter-spacing:-0.550px;color:#000'><span style="color:#000000">      </span><span style="color:#0000ff">else</span><span style="color:#000000"> setQuestion</span><span style="color:#319331">(</span><span style="color:#000000">data</span><span style="color:#7b3814">[</span><span style="color:#098658">0</span><span style="color:#7b3814">]</span><span style="color:#319331">)</span><span style="color:#000000">; </span><span style="color:#008000">// On stocke la première question dans l’état</span></div>
<div class="t" style='left:940.0px;top:877.3px;font:25px "Liberation Mono",monospace;letter-spacing:-0.550px;color:#000'><span style="color:#000000">    </span><span style="color:#0431fa">}</span></div>
<div class="t" style='left:940.0px;top:949.3px;font:25px "Liberation Mono",monospace;letter-spacing:-0.550px;color:#000'><span style="color:#000000">    fetchQuestion</span><span style="color:#0431fa">()</span><span style="color:#000000">;</span></div>
<div class="t" style='left:940.0px;top:985.3px;font:25px "Liberation Mono",monospace;letter-spacing:-0.550px;color:#000'><span style="color:#000000">  </span><span style="color:#7b3814">}</span><span style="color:#000000">, </span><span style="color:#7b3814">[]</span><span style="color:#319331">)</span><span style="color:#000000">;</span></div>
<div class="t" style='left:940.0px;top:1057.3px;font:25px "Liberation Mono",monospace;letter-spacing:-0.550px;color:#000'><span style="color:#000000">  </span><span style="color:#0000ff">return</span><span style="color:#000000"> </span><span style="color:#319331">(</span></div>
<div class="t" style='left:940.0px;top:1093.3px;font:25px "Liberation Mono",monospace;letter-spacing:-0.550px;color:#000'><span style="color:#000000">    </span><span style="color:#800000">&lt;div&gt;</span></div>
<div class="t" style='left:940.0px;top:1129.3px;font:25px "Liberation Mono",monospace;letter-spacing:-0.550px;color:#000'><span style="color:#000000">      </span><span style="color:#800000">&lt;Alert</span><span style="color:#000000"> </span><span style="color:#e50000">className</span><span style="color:#000000">=</span><span style="color:#a31515">"</span></div>
<div class="a" style="left:1292.4px;top:1132px;width:19px;height:18px;border:2px solid #111;background:#eff6ff"></div>
<div class="t" style='left:1315.6px;top:1129.3px;font:25px "Liberation Mono",monospace;letter-spacing:-0.550px;color:#000'><span style="color:#a31515">bg-blue-50 </span></div>
<div class="a" style="left:1480.1px;top:1132px;width:19px;height:18px;border:2px solid #111;background:#93c5fd"></div>
<div class="t" style='left:1503.3px;top:1129.3px;font:25px "Liberation Mono",monospace;letter-spacing:-0.550px;color:#000'><span style="color:#a31515">border-blue-300 </span></div>
<div class="a" style="left:1740.1px;top:1132px;width:19px;height:18px;border:2px solid #111;background:#1e40af"></div>
<div class="t" style='left:1763.3px;top:1129.3px;font:25px "Liberation Mono",monospace;letter-spacing:-0.550px;color:#000'><span style="color:#a31515">text-blue-800 max-w-xl mx-auto mt-6"</span><span style="color:#800000">&gt;</span></div>
<div class="a" style="left:2484px;top:260px;width:1px;height:904px;background:#ececec;"></div>
<div class="a" style="left:2485px;top:260px;width:9px;height:74px;background:#93bbe5;"></div>
<div class="a" style="left:2485px;top:358px;width:9px;height:174px;background:#a2c3a4;"></div>
<div class="a" style="left:2485px;top:544px;width:9px;height:259px;background:#93bbe5;"></div>
<div class="a" style="left:2485px;top:828px;width:9px;height:12px;background:#a2c3a4;"></div>
<div class="a" style="left:2485px;top:517px;width:27px;height:4px;background:#4a4a4a;"></div>
<div class="a" style="left:1027px;top:1160px;width:2px;height:4px;background:#d3d3d3;"></div>
<div class="t" style='left:848.2px;top:1187.3px;font:400 22px "Liberation Sans",sans-serif;color:#6f6f6f;letter-spacing:-0.549px;'>PROBLÈMES</div>
<div class="t" style='left:1029.7px;top:1187.3px;font:400 22px "Liberation Sans",sans-serif;color:#6f6f6f;letter-spacing:-0.736px;'>SORTIE</div>
<div class="t" style='left:1156.6px;top:1187.3px;font:400 22px "Liberation Sans",sans-serif;color:#6f6f6f;letter-spacing:-0.458px;'>CONSOLE DE DÉBOGAGE</div>
<div class="t" style='left:1474.4px;top:1187.3px;font:400 22px "Liberation Sans",sans-serif;color:#424242;letter-spacing:-0.231px;'>TERMINAL</div>
<div class="a" style="left:1470px;top:1221px;width:119px;height:2px;background:#424242;"></div>
<div class="t" style='left:1633.0px;top:1187.3px;font:400 22px "Liberation Sans",sans-serif;color:#6f6f6f;letter-spacing:-0.558px;'>PORTS</div>
<svg style="left:2020px;top:1180px" width="45" height="45" viewBox="0 0 45 45"><g fill="none" stroke="#424242" stroke-width="2.2"><rect x="8.6" y="8" width="26" height="26" rx="2.5"/><path d="M14.5 16L20.5 21L14.5 26M22 28.5H29"/></g></svg>
<div class="t" style='left:2066.3px;top:1188.9px;font:400 22.5px "Liberation Sans",sans-serif;color:#616161;letter-spacing:0.184px;'>node</div>
<svg style="left:2130px;top:1180px" width="70" height="40" viewBox="0 0 70 40"><g fill="none" stroke="#424242" stroke-width="2.2"><path d="M22.8 7V33M10 20H35.8"/><path d="M49 18L56.2 25.2L63.4 18"/></g></svg>
<svg style="left:2210px;top:1180px" width="45" height="45" viewBox="0 0 45 45"><g fill="none" stroke="#424242" stroke-width="2.2"><rect x="11.1" y="10" width="24.6" height="24" rx="2.5"/><path d="M23.4 10V34"/></g></svg>
<svg style="left:2265px;top:1180px" width="40" height="45" viewBox="0 0 40 45"><g fill="none" stroke="#424242" stroke-width="2.2"><path d="M7 10.5H31M11.5 10.5V32.5a2 2 0 0 0 2 2H24.5a2 2 0 0 0 2-2V10.5M15.5 10.5V7.5H22.5V10.5M16.5 15V29M21.5 15V29"/></g></svg>
<svg style="left:2315px;top:1190px" width="40" height="20" viewBox="0 0 40 20"><circle cx="10.4" cy="11" r="2.4" fill="#424242"/><circle cx="20.700000000000003" cy="11" r="2.4" fill="#424242"/><circle cx="31.0" cy="11" r="2.4" fill="#424242"/></svg>
<div class="a" style="left:2374px;top:1184px;width:2px;height:31px;background:#bdbdbd;"></div>
<svg style="left:2395px;top:1180px" width="40" height="40" viewBox="0 0 40 40"><g fill="none" stroke="#424242" stroke-width="2.2"><path d="M7 14V8H13M24.8 8H30.8V14M30.8 25.8V31.8H24.8M13 31.8H7V25.8"/></g></svg>
<svg style="left:2450px;top:1185px" width="30" height="30" viewBox="0 0 30 30"><path d="M7.6 6.5L24.6 23.5M24.6 6.5L7.6 23.5" fill="none" stroke="#424242" stroke-width="2.2"/></svg>
<div class="a" style="left:2420px;top:1234px;width:2px;height:126px;background:#d6d6d6;"></div>
<div class="a" style="left:2392px;top:1248px;width:29px;height:112px;border:2px solid #dcdcdc;border-right:none;border-bottom:none;background:#fff"></div>
<div class="a" style="left:2422px;top:1278px;width:90px;height:44px;background:#e4e6f1;"></div>
<svg style="left:2445px;top:1235px" width="45" height="40" viewBox="0 0 45 40"><g fill="none" stroke="#424242" stroke-width="2.2"><rect x="9" y="6.5" width="26.4" height="26.4" rx="2.5"/><path d="M14.5 14L20.5 19.5L14.5 25M22 27.5H29"/></g></svg>
<svg style="left:2445px;top:1279px" width="45" height="40" viewBox="0 0 45 40"><g fill="none" stroke="#424242" stroke-width="2.2"><rect x="9" y="6.5" width="26.4" height="26.4" rx="2.5"/><path d="M14.5 14L20.5 19.5L14.5 25M22 27.5H29"/></g></svg>
<div class="t" style='left:848px;top:1250.1px;font:24px "Liberation Mono",monospace;letter-spacing:-0.400px;color:#333'><span style="color:#333">   Starting...</span></div>
<div class="t" style='left:848px;top:1278.1px;font:24px "Liberation Mono",monospace;letter-spacing:-0.400px;color:#333'><span style="color:#333">   Ready in 513ms</span></div>
<div class="t" style='left:848px;top:1306.1px;font:24px "Liberation Mono",monospace;letter-spacing:-0.400px;color:#333'><span style="color:#333"> GET / </span><span style="color:#2b7d1c">200</span><span style="color:#333"> in 1386ms </span><span style="color:#8c8c8c">(compile: 1261ms, render: 125ms)</span></div>
<div class="a" style="left:848px;top:1332px;width:14px;height:28px;background:#333333;"></div>
<svg style="left:860px;top:1253.5px" width="20" height="20" viewBox="0 0 20 20"><path d="M4.5 11L7.8 15L14.2 5.5" fill="none" stroke="#2b7d1c" stroke-width="2.6" stroke-linecap="round"/></svg>
<svg style="left:860px;top:1281.5px" width="20" height="20" viewBox="0 0 20 20"><path d="M4.5 11L7.8 15L14.2 5.5" fill="none" stroke="#2b7d1c" stroke-width="2.6" stroke-linecap="round"/></svg>
<svg style="left:130px;top:1362px" width="30" height="40" viewBox="0 0 30 40"><g fill="none" stroke="#fff" stroke-width="1.8"><path d="M7.6 15.5L15.5 23L7.6 30.5M24.1 8.2L16.4 15.8L24.1 23.4"/></g></svg>
<svg style="left:190px;top:1362px" width="40" height="40" viewBox="0 0 40 40"><g fill="none" stroke="#fff" stroke-width="2"><circle cx="13.9" cy="10.5" r="3.6"/><circle cx="13.9" cy="29.6" r="3.6"/><circle cx="26.1" cy="15.5" r="3.6"/><path d="M13.9 14.1V26M26.1 19.1C26.1 23.5 14 21.5 13.9 26"/></g></svg>
<div class="t" style='left:231.9px;top:1369.2px;font:400 24.5px "Liberation Sans",sans-serif;color:#ffffff;letter-spacing:0.052px;'>main*</div>
<svg style="left:300px;top:1362px" width="45" height="40" viewBox="0 0 45 40"><g fill="none" stroke="#fff" stroke-width="2" stroke-linejoin="miter"><path d="M12 20A10.5 10.5 0 0 1 32.5 16.5"/><path d="M27.8 15.6L32.8 20.3L36.3 14.3"/><path d="M33 21A10.5 10.5 0 0 1 12.5 24.5"/><path d="M17.2 25.4L12.2 20.7L8.7 26.7"/></g></svg>
<svg style="left:360px;top:1362px" width="40" height="40" viewBox="0 0 40 40"><g fill="none" stroke="#fff" stroke-width="2"><circle cx="21.9" cy="19.9" r="11"/><path d="M17.4 15.4L26.4 24.4M26.4 15.4L17.4 24.4"/></g></svg>
<div class="t" style='left:404.2px;top:1369.2px;font:400 24.5px "Liberation Sans",sans-serif;color:#ffffff;letter-spacing:-1.141px;'>0</div>
<svg style="left:420px;top:1362px" width="40" height="40" viewBox="0 0 40 40"><g fill="none" stroke="#fff" stroke-width="2" stroke-linejoin="round"><path d="M18.7 8.8L29.5 29.3H7.9Z"/></g><path d="M17.6 15.5H19.8L19.5 23H17.9Z" fill="#fff"/><circle cx="18.7" cy="26" r="1.3" fill="#fff"/></svg>
<div class="t" style='left:460.3px;top:1369.2px;font:400 24.5px "Liberation Sans",sans-serif;color:#ffffff;letter-spacing:-0.741px;'>0</div>
<div class="t" style='left:506.4px;top:1369.2px;font:400 24.5px "Liberation Sans",sans-serif;color:#ffffff;letter-spacing:0.582px;'>{..} : 727</div>
<div class="t" style='left:638.5px;top:1369.2px;font:400 24.5px "Liberation Sans",sans-serif;color:#ffffff;letter-spacing:-0.002px;'>Git Graph</div>
<svg style="left:1250px;top:1362px" width="40" height="40" viewBox="0 0 40 40"><g fill="none" stroke="#fff" stroke-width="2"><circle cx="17.6" cy="20" r="5.6"/><path d="M17.6 5.5V14.4M17.6 25.6V33.5"/></g></svg>
<div class="t" style='left:1289.5px;top:1369.2px;font:400 24.5px "Liberation Sans",sans-serif;color:#ffffff;letter-spacing:0.061px;'>Pas encore validé</div>
<div class="t" style='left:1519.5px;top:1369.2px;font:400 24.5px "Liberation Sans",sans-serif;color:#ffffff;letter-spacing:0.396px;'>L 22, col 1</div>
<div class="t" style='left:1671.6px;top:1369.2px;font:400 24.5px "Liberation Sans",sans-serif;color:#ffffff;letter-spacing:-0.038px;'>Espaces : 2</div>
<div class="t" style='left:1833.4px;top:1369.2px;font:400 24.5px "Liberation Sans",sans-serif;color:#ffffff;letter-spacing:0.456px;'>UTF-8</div>
<div class="t" style='left:1938.6px;top:1369.2px;font:400 24.5px "Liberation Sans",sans-serif;color:#ffffff;letter-spacing:-1.347px;'>LF</div>
<div class="t" style='left:2000.8px;top:1370.2px;font:400 24.5px "Liberation Sans",sans-serif;color:#ffffff;letter-spacing:-0.829px;'>{ }</div>
<div class="t" style='left:2039.0px;top:1369.2px;font:400 24.5px "Liberation Sans",sans-serif;color:#ffffff;letter-spacing:0.194px;'>TypeScript JSX</div>
<svg style="left:2235px;top:1362px" width="45" height="40" viewBox="0 0 45 40"><path fill="#fff" d="M12 18.5L7.6 21.8Q6.3 26 8 28.8Q12 32.6 21.5 32.6Q31 32.6 35 28.8Q36.7 26 35.4 21.8L31 18.5Z"/><path fill="#3478c6" d="M13.2 20.3H29.8V28.6Q26 30.4 21.5 30.4Q17 30.4 13.2 28.6Z"/><g fill="#fff"><rect x="17" y="21.7" width="2.8" height="5.2" rx="1.4"/><rect x="23" y="21.7" width="2.8" height="5.2" rx="1.4"/></g><g fill="#3478c6" stroke="#fff" stroke-width="2.6"><rect x="11.2" y="9.1" width="9" height="9" rx="3.6"/><rect x="22.5" y="9.1" width="9" height="9" rx="3.6"/></g></svg>
<svg style="left:2300px;top:1362px" width="35" height="40" viewBox="0 0 35 40"><g fill="none" stroke="#fff" stroke-width="2"><path d="M10.5 26.5A10.5 10.5 0 1 1 23 26.5"/><path d="M13.5 21.5A5 5 0 1 1 20 21.5"/></g><circle cx="16.7" cy="17.5" r="2.3" fill="#fff"/><rect x="15" y="20.5" width="3.4" height="12.5" rx="1.2" fill="#fff"/></svg>
<div class="t" style='left:2338.4px;top:1369.2px;font:400 24.5px "Liberation Sans",sans-serif;color:#ffffff;letter-spacing:-0.220px;'>Go Live</div>
<svg style="left:2450px;top:1362px" width="35" height="40" viewBox="0 0 35 40"><g fill="none" stroke="#fff" stroke-width="2" stroke-linejoin="round"><path d="M18 8.5C12.5 8.5 10.5 13 10.5 17.5V24.5L8 28.5H28L25.5 24.5V17.5C25.5 13 23.5 8.5 18 8.5Z"/><path d="M15 31A3 3 0 0 0 21 31"/></g></svg>
<div class="a" style="left:112px;top:76px;width:2400px;height:1328px;border-radius:20px;box-shadow:inset 0 0 0 1px rgba(255,255,255,0.28)"></div>
</div></body></html>
